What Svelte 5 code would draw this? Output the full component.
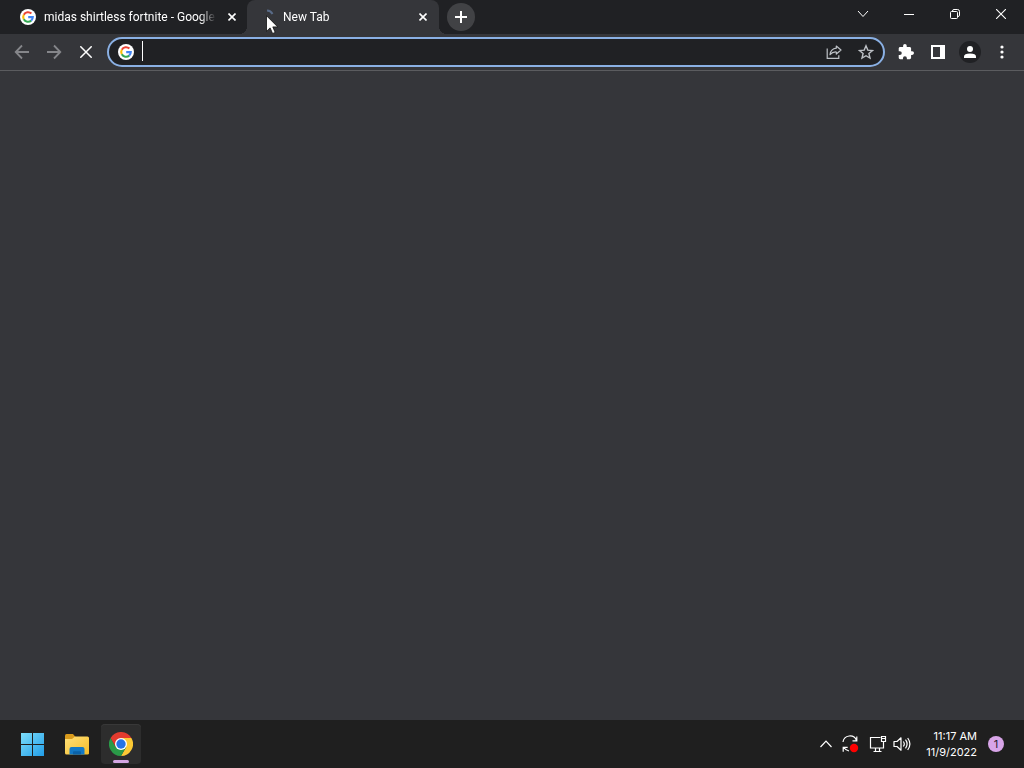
<script>
  let address = "";

  const tabs = [
    { title: "midas shirtless fortnite - Google", active: false },
    { title: "New Tab", active: true }
  ];
</script>

<style>
  :global(body) {
    margin: 0;
    background: #35363a;
  }

  .desktop {
    display: flex;
    flex-direction: column;
    min-height: 100vh;
    font-family: Roboto, "Open Sans", sans-serif;
    font-size: 12px;
    color: #fff;
    background: #35363a;
  }

  button {
    display: flex;
    align-items: center;
    justify-content: center;
    flex: none;
    margin: 0;
    padding: 0;
    border: 0;
    color: inherit;
    background: none;
    font: inherit;
  }

  svg {
    display: block;
    flex: none;
  }

  .tabstrip {
    display: flex;
    height: 34px;
    background: #202124;
  }

  .tabs {
    display: flex;
    flex: 1;
    min-width: 0;
    padding-left: 8px;
  }

  .tab {
    position: relative;
    display: flex;
    align-items: center;
    box-sizing: border-box;
    width: 239px;
    height: 34px;
    padding: 0 7px 0 12px;
  }

  .tab.active {
    width: 192px;
    padding-right: 8px;
    border-radius: 8px 8px 0 0;
    background: #35363a;
  }

  .tab.active::before,
  .tab.active::after {
    content: "";
    position: absolute;
    bottom: 0;
    width: 8px;
    height: 8px;
  }

  .tab.active::before {
    left: -8px;
    background: radial-gradient(circle at 0 0, transparent 8px, #35363a 8px);
  }

  .tab.active::after {
    right: -8px;
    background: radial-gradient(circle at 100% 0, transparent 8px, #35363a 8px);
  }

  .title {
    flex: 1;
    min-width: 0;
    margin: 0 8px;
    overflow: hidden;
    line-height: 16px;
    white-space: nowrap;
    mask-image: linear-gradient(to left, transparent, #000 16px);
  }

  .tab-close {
    width: 16px;
    height: 16px;
  }

  .cursor {
    position: absolute;
    left: 19px;
    top: 15px;
  }

  .new-tab {
    width: 28px;
    height: 28px;
    margin: 3px 0 0 8px;
    border-radius: 50%;
    background: #414245;
  }

  .window-buttons {
    display: flex;
  }

  .window-buttons button {
    width: 46px;
    height: 28px;
  }

  .toolbar {
    display: flex;
    align-items: center;
    box-sizing: border-box;
    height: 37px;
    padding: 0 6px;
    border-bottom: 1px solid #5b5c5f;
    background: #35363a;
  }

  .toolbar > button {
    width: 32px;
    height: 32px;
  }

  .toolbar .dim {
    color: #85868a;
  }

  .omnibox {
    display: flex;
    align-items: center;
    flex: 1;
    box-sizing: border-box;
    height: 30px;
    margin: 0 5px;
    padding: 0 1px 0 9px;
    border: 2px solid #8ab0e4;
    border-radius: 15px;
    background: #202124;
  }

  .omnibox button {
    width: 32px;
    height: 26px;
    color: #bdc1c6;
  }

  .caret {
    width: 1px;
    height: 20px;
    margin: 0 0 2px 8px;
    background: #fff;
  }

  .omnibox input {
    flex: 1;
    min-width: 0;
    padding: 0;
    border: 0;
    outline: 0;
    color: #fff;
    background: none;
    font: inherit;
  }

  .avatar {
    display: flex;
    align-items: center;
    justify-content: center;
    width: 22px;
    height: 22px;
    border-radius: 50%;
    background: #202124;
  }

  .page {
    flex: 1;
  }

  .taskbar {
    display: flex;
    align-items: center;
    height: 48px;
    padding: 0 20px 0 13px;
    background: #1f1f1f;
  }

  .apps {
    display: flex;
    flex: 1;
    gap: 4px;
  }

  .apps button {
    position: relative;
    width: 40px;
    height: 40px;
    border-radius: 4px;
  }

  .apps .running {
    background: #2d2d2d;
    box-shadow: inset 0 1px #383838;
  }

  .running::after {
    content: "";
    position: absolute;
    left: 12px;
    bottom: 1px;
    width: 16px;
    height: 3px;
    border-radius: 2px;
    background: #d4a6e3;
  }

  .tray {
    display: flex;
    align-items: center;
  }

  .tray button {
    width: 24px;
    height: 32px;
  }

  .tray .network {
    margin-left: 4px;
  }

  .tray .clock {
    display: block;
    width: auto;
    min-width: 52px;
    margin: 0 11px;
    font-family: Inter, sans-serif;
    font-size: 11px;
    line-height: 16px;
    text-align: right;
    white-space: nowrap;
  }

  .tray .badge {
    width: 16px;
    height: 16px;
    border-radius: 50%;
    color: #2b2230;
    background: #d8a5e8;
    font-family: Inter, sans-serif;
    font-size: 11px;
    line-height: 16px;
  }
</style>

{#snippet google()}
  <svg width="16" height="16" viewBox="0 0 16 16">
    <circle cx="8" cy="8" r="8" fill="#fff" />
    <g fill="none" stroke-width="2.1">
      <path d="M11.4 4.6A4.8 4.8 0 0 0 3.8 5.7" stroke="#ea4335" />
      <path d="M3.8 5.7A4.8 4.8 0 0 0 3.8 10.3" stroke="#fbbc05" />
      <path d="M3.8 10.3A4.8 4.8 0 0 0 11.2 11.6" stroke="#34a853" />
      <path d="M11.2 11.6A4.8 4.8 0 0 0 12.8 8.1H8.2" stroke="#4285f4" />
    </g>
  </svg>
{/snippet}

<div class="desktop">
  <header class="tabstrip">
    <div class="tabs">
      {#each tabs as tab}
        <div class="tab" class:active={tab.active}>
          {#if tab.active}
            <svg width="16" height="16" viewBox="0 0 16 16">
              <path d="M8 1.5A6.5 6.5 0 0 1 13.5 5" fill="none" stroke="#596b88" stroke-width="2" />
            </svg>
          {:else}
            {@render google()}
          {/if}
          <span class="title">{tab.title}</span>
          <button class="tab-close" aria-label="Close tab">
            <svg width="8" height="8" viewBox="0 0 8 8" stroke="#fff" stroke-width="1.6">
              <path d="M.5 .5l7 7M7.5 .5l-7 7" />
            </svg>
          </button>
          {#if tab.active}
            <svg class="cursor" width="13" height="20" viewBox="0 0 13 20">
              <path d="M.5 .7v15.6l3.6-3.4 2.5 5.6 2.6-1.1-2.4-5.5h4.9z" fill="#fff" stroke="#111" stroke-width=".8" />
            </svg>
          {/if}
        </div>
      {/each}
      <button class="new-tab" aria-label="New tab">
        <svg width="12" height="12" viewBox="0 0 12 12" stroke="#fff" stroke-width="2">
          <path d="M6 0v12M0 6h12" />
        </svg>
      </button>
    </div>
    <div class="window-buttons">
      <button aria-label="Search tabs">
        <svg width="12" height="8" viewBox="0 0 12 8" fill="none" stroke="#fff">
          <path d="M1 1l5 5.5L11 1" />
        </svg>
      </button>
      <button aria-label="Minimize">
        <svg width="10" height="10" viewBox="0 0 10 10" stroke="#fff">
          <path d="M0 5.5h10" />
        </svg>
      </button>
      <button aria-label="Restore">
        <svg width="10" height="10" viewBox="0 0 10 10" fill="none" stroke="#fff">
          <rect x=".5" y="2.5" width="7" height="7" rx="1" />
          <path d="M2.5 2.5V2Q2.5 .5 4 .5h3.5q2 0 2 2V6q0 1.5-1.5 1.5" />
        </svg>
      </button>
      <button aria-label="Close">
        <svg width="10" height="10" viewBox="0 0 10 10" stroke="#fff" stroke-width="1.1">
          <path d="M0 0l10 10M10 0L0 10" />
        </svg>
      </button>
    </div>
  </header>

  <nav class="toolbar">
    <button class="dim" aria-label="Back">
      <svg width="16" height="16" viewBox="0 0 16 16" fill="none" stroke="currentColor" stroke-width="1.8">
        <path d="M15 8H2M8 1.5L1.7 8 8 14.5" />
      </svg>
    </button>
    <button class="dim" aria-label="Forward">
      <svg width="16" height="16" viewBox="0 0 16 16" fill="none" stroke="currentColor" stroke-width="1.8">
        <path d="M1 8h13M8 1.5L14.3 8 8 14.5" />
      </svg>
    </button>
    <button aria-label="Stop loading">
      <svg width="12" height="12" viewBox="0 0 12 12" stroke="#fff" stroke-width="1.5">
        <path d="M.3 .3l11.4 11.4M11.7 .3L.3 11.7" />
      </svg>
    </button>

    <div class="omnibox">
      {@render google()}
      <span class="caret"></span>
      <input type="text" aria-label="Address and search bar" bind:value={address} />
      <button aria-label="Share this page">
        <svg width="16" height="16" viewBox="0 0 16 16" fill="none" stroke="currentColor" stroke-width="1.2">
          <path d="M1.2 4.5v9.8h11.6v-3" />
          <path d="M10.3 2l4.7 4-4.7 4V8Q6.500 7.700 4 10.700 4.700 4.900 10.300 4.200z" stroke-linejoin="round" />
        </svg>
      </button>
      <button aria-label="Bookmark this tab">
        <svg width="16" height="16" viewBox="0 0 16 16" fill="none" stroke="currentColor" stroke-width="1.4">
          <path d="M8 1.8l1.8 4.3 4.7.4-3.6 3 1.1 4.6L8 11.7l-4 2.4 1.1-4.6-3.6-3 4.7-.4z" />
        </svg>
      </button>
    </div>

    <button aria-label="Extensions">
      <svg width="16" height="16" viewBox="1 1 22 22" fill="#fff">
        <path d="M20.5 11H19V7c0-1.1-.9-2-2-2h-4V3.5a2.5 2.5 0 0 0-5 0V5H4c-1.1 0-2 .9-2 2v3.8h1.5a2.7 2.7 0 0 1 0 5.4H2V20c0 1.1.9 2 2 2h3.8v-1.5a2.7 2.7 0 0 1 5.4 0V22H17c1.1 0 2-.9 2-2v-4h1.5a2.5 2.5 0 0 0 0-5z" />
      </svg>
    </button>
    <button aria-label="Side panel">
      <svg width="14" height="14" viewBox="0 0 14 14">
        <path d="M0 0h14v14H0zM2 2v10h7V2z" fill="#fff" fill-rule="evenodd" />
      </svg>
    </button>
    <button aria-label="Profile">
      <span class="avatar">
        <svg width="12" height="12" viewBox="0 0 12 12" fill="#fff">
          <circle cx="6" cy="3" r="3" />
          <path d="M0 12v-1.5Q0 7.5 6 7.5t6 3V12z" />
        </svg>
      </span>
    </button>
    <button aria-label="Menu">
      <svg width="4" height="14" viewBox="0 0 4 14" fill="#fff">
        <circle cx="2" cy="2" r="1.6" />
        <circle cx="2" cy="7" r="1.6" />
        <circle cx="2" cy="12" r="1.6" />
      </svg>
    </button>
  </nav>

  <main class="page"></main>

  <footer class="taskbar">
    <div class="apps">
      <button aria-label="Start">
        <svg width="24" height="24" viewBox="0 0 24 24">
          <defs>
            <linearGradient id="start" gradientUnits="userSpaceOnUse" x1="0" y1="0" x2="24" y2="24">
              <stop offset="0" stop-color="#7fe0fc" />
              <stop offset="1" stop-color="#1f9be6" />
            </linearGradient>
          </defs>
          <path d="M0 1h11v11H0zM12 1h11v11H12zM0 13h11v11H0zM12 13h11v11H12z" fill="url(#start)" />
        </svg>
      </button>
      <button aria-label="File Explorer">
        <svg width="26" height="24" viewBox="0 0 26 24">
          <defs>
            <linearGradient id="folder" x1="0" y1="0" x2="1" y2="1">
              <stop offset="0" stop-color="#ffe07a" />
              <stop offset="1" stop-color="#f6bd28" />
            </linearGradient>
          </defs>
          <path d="M1 3.5Q1 2 2.5 2H9l2.500 3-2 4H1z" fill="#d99b1c" />
          <path d="M1 7h7l3-2.500h12.500Q25 4.500 25 6v15.500q0 1-1.500 1h-21Q1 22.500 1 21z" fill="url(#folder)" />
          <path d="M5.500 22.500V17q0-2 2-2h11q2 0 2 2v5.500z" fill="#1379c6" />
          <path d="M9 22.500V20q0-.8.8-.8h6.400q.8 0 .8.8v2.500z" fill="#0b62a8" />
        </svg>
      </button>
      <button class="running" aria-label="Google Chrome">
        <svg width="24" height="24" viewBox="0 0 24 24">
          <path d="M12 6h10.4A12 12 0 0 1 12 24l5.2-9z" fill="#fcc934" />
          <path d="M1.6 6A12 12 0 0 0 12 24l5.2-9H6.8z" fill="#2a9a48" />
          <path d="M12 6h10.4A12 12 0 0 0 1.6 6l5.2 9z" fill="#e33b2e" />
          <circle cx="12" cy="12" r="6" fill="#fff" />
          <circle cx="12" cy="12" r="4.7" fill="#2573e6" />
        </svg>
      </button>
    </div>

    <div class="tray">
      <button aria-label="Show hidden icons">
        <svg width="12" height="8" viewBox="0 0 12 8" fill="none" stroke="#fff" stroke-width="1.2">
          <path d="M.5 7L6 1.2 11.5 7" />
        </svg>
      </button>
      <button aria-label="Windows Update">
        <svg width="18" height="18" viewBox="0 0 18 18" fill="none" stroke="#fff" stroke-width="1.2">
          <path d="M2 7A7 7 0 0 1 15.5 5.5M15.8 1.5v4.3h-4.3M8 16Q4.8 15.5 2.8 12.5M2.2 16.8v-4.5h4.5" />
          <circle cx="13" cy="13" r="4.2" fill="#f00" stroke="none" />
        </svg>
      </button>
      <button class="network" aria-label="Network">
        <svg width="18" height="18" viewBox="0 0 18 18" fill="none" stroke="#fff" stroke-width="1.2">
          <path d="M11.5 2.5h-10V13h13V9M4.5 16.5h8M6.5 13v3.5M10.5 13v3.5" />
          <path d="M12.500 1.500h4v5h-4zM12.500 3.500h4M14.500 6.500V9" />
        </svg>
      </button>
      <button aria-label="Volume">
        <svg width="18" height="16" viewBox="0 0 18 16" fill="none" stroke="#fff" stroke-width="1.2">
          <path d="M1 5.5h3l4-3.7v12.4l-4-3.7H1z" stroke-linejoin="round" />
          <path d="M10.3 5.5q2 2.5 0 5M12.5 3.7q3.2 4.3 0 8.6M14.7 2q4.4 6 0 12" />
        </svg>
      </button>
      <button class="clock">11:17 AM<br />11/9/2022</button>
      <button class="badge" aria-label="1 notification">1</button>
    </div>
  </footer>
</div>
